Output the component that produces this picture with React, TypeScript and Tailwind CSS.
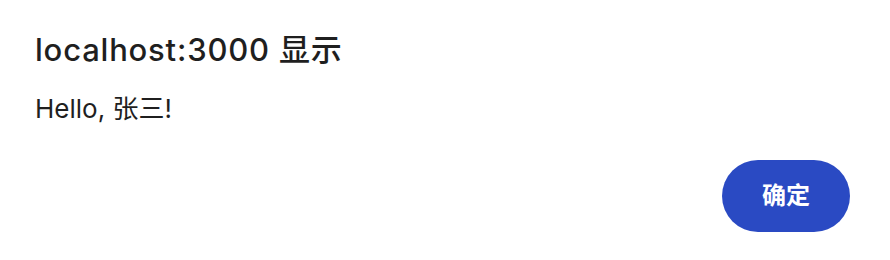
import React from "react";

const font = {
  fontFamily: '"Inter", "Noto Sans CJK SC", sans-serif',
};

export default function App() {
  return (
    <div className="w-[890px] h-[260px] bg-white text-[#1f1f1f]" style={font}>
      <div className="pl-[35px] pr-[40px] pt-[32px]">
        <h1 className="text-[31px] leading-[36px] font-medium tracking-[0.8px]">localhost:3000 显示</h1>
        <p className="mt-[25px] text-[26px] leading-[32px]">Hello, 张三!</p>
        <div className="flex justify-end mt-[35px]">
          <button className="w-[128px] h-[72px] rounded-full bg-[#2a4ac3] text-white text-[24px] font-bold">
            确定
          </button>
        </div>
      </div>
    </div>
  );
}
